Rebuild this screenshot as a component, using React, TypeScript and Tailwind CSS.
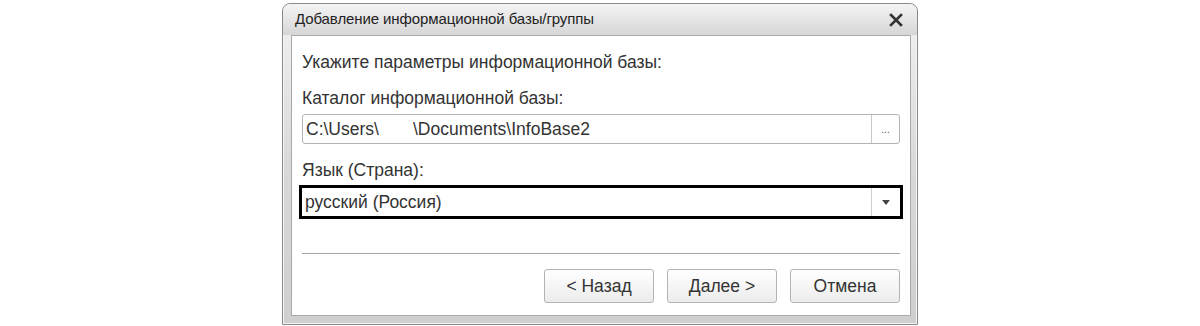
import React from "react";

export default function App() {
  const font = { fontFamily: '"Liberation Sans", Arial, sans-serif' };
  return (
    <div className="w-[1200px] h-[326px] bg-white flex justify-center pt-[3px]" style={font}>
      <div className="w-[636px] h-[322px] rounded-t-[8px] border border-[#8a8a8a] bg-gradient-to-b from-[#f2f2f2] via-[#d9d9d9] to-[#cfcfcf] flex flex-col shadow-[inset_0_0_0_1px_#f4f4f4]">
        <div className="h-[31px] flex items-center justify-between pl-[12px] pr-[14px] bg-gradient-to-b from-[#f4f4f4] to-[#d6d6d6] rounded-t-[8px]">
          <span className="text-[15px] text-[#222] tracking-[-0.1px]">Добавление информационной базы/группы</span>
          <svg width="14" height="14" viewBox="0 0 14 14">
            <path d="M2 2 L12 12 M12 2 L2 12" stroke="#333" strokeWidth="2.6" strokeLinecap="square" />
          </svg>
        </div>
        <div className="flex-1 pl-[8px] pr-[6px] pb-[8px]">
          <div className="h-full bg-white border border-[#a9a9a9] pl-[10px] pr-[10px] flex flex-col text-[#333] text-[17.5px]">
            <div className="mt-[16px] h-[20px] leading-[20px]">Укажите параметры информационной базы:</div>
            <div className="mt-[16px] h-[20px] leading-[20px]">Каталог информационной базы:</div>
            <div className="mt-[6px] h-[30px] border border-[#b4b4b4] rounded-[3px] flex">
              <div className="flex-1 pl-[3px] leading-[28px] text-[#333]">C:\Users\&nbsp;&nbsp;&nbsp;&nbsp;&nbsp;&nbsp;&nbsp;\Documents\InfoBase2</div>
              <div className="w-[28px] border-l border-[#c8c8c8] flex items-end justify-center pb-[8px] text-[10px] leading-none text-[#555]">...</div>
            </div>
            <div className="mt-[16px] h-[20px] leading-[20px]">Язык (Страна):</div>
            <div className="mt-[5px] -mx-[3px] h-[34px] border-[3px] border-black flex">
              <div className="flex-1 pl-[3px] leading-[28px] text-[#333]">русский (Россия)</div>
              <div className="w-[29px] border-l border-[#cfcfcf] flex items-center justify-center">
                <svg width="8" height="5" viewBox="0 0 8 5">
                  <path d="M0 0 L8 0 L4 5 Z" fill="#444" />
                </svg>
              </div>
            </div>
            <div className="mt-[34px] h-[1px] bg-[#a6a6a6]" />
            <div className="mt-[15px] flex justify-end gap-[13px]">
              {["< Назад", "Далее >", "Отмена"].map((t) => (
                <div
                  key={t}
                  className="w-[110px] h-[34px] rounded-[3px] border border-[#b3b3b3] bg-gradient-to-b from-[#ffffff] to-[#ececec] flex items-center justify-center text-[17.5px] text-[#333]"
                >
                  {t}
                </div>
              ))}
            </div>
          </div>
        </div>
      </div>
    </div>
  );
}
